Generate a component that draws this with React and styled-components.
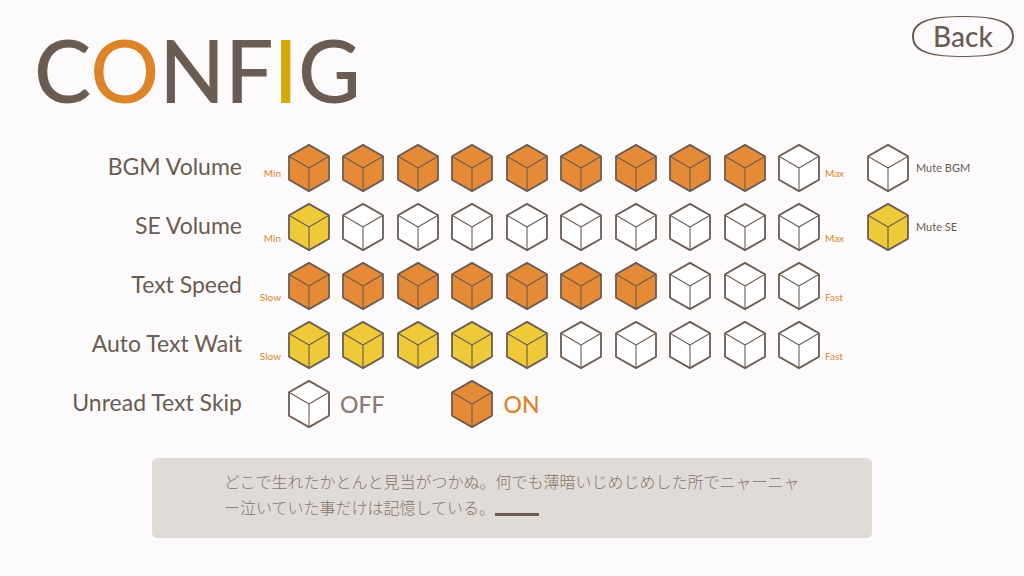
import React, { useState } from "react";
import styled, { createGlobalStyle } from "styled-components";

const ink = "#6b5c53";
const orange = "#e58a36";
const yellow = "#efca38";

const GlobalStyle = createGlobalStyle`
  *, *::before, *::after { box-sizing: border-box; }
  body {
    margin: 0;
    background: #fcfafa;
    color: ${ink};
    font-family: Lato, "Noto Sans CJK JP", sans-serif;
  }
`;

const Page = styled.div`
  min-height: 100vh;
`;

const Header = styled.header`
  display: flex;
  justify-content: space-between;
  align-items: flex-start;
  padding: 16px 10px 32px 34px;
`;

const Title = styled.h1`
  margin: 12px 0 0;
  font-size: 86px;
  line-height: 84px;
  font-weight: 500;
`;

const Accent = styled.span`
  color: ${(p) => p.$color};
`;

const BackButton = styled.button`
  position: relative;
  width: 102px;
  height: 41px;
  padding: 0;
  border: 0;
  background: none;
  color: ${ink};
  font: 500 28px/41px Lato, sans-serif;
  cursor: pointer;
`;

const BackOutline = styled.svg`
  position: absolute;
  inset: 0;
  width: 100%;
  height: 100%;
`;

const BackText = styled.span`
  position: relative;
`;

const Settings = styled.main`
  display: flex;
  flex-direction: column;
  gap: 11px;
`;

const Row = styled.fieldset`
  display: grid;
  grid-template-columns: 242px 46px minmax(0, 1fr) 47px 157px;
  align-items: center;
  min-width: 0;
  height: 48px;
  margin: 0;
  padding: 0;
  border: 0;
`;

const RowName = styled.span`
  padding-bottom: 4px;
  font-size: 23px;
  line-height: 24px;
  text-align: right;
  white-space: nowrap;
`;

const Hint = styled.span`
  padding: ${(p) => (p.$low ? "22px" : "9px")} 7px 0 5px;
  color: #dc842f;
  font-size: 10px;
  line-height: 12px;
  text-align: ${(p) => p.$align};
`;

const Steps = styled.div`
  display: flex;
  justify-content: space-between;
`;

const Choices = styled.div`
  display: flex;
  gap: 67px;
`;

const Option = styled.label`
  position: relative;
  display: inline-flex;
  align-items: center;
  justify-self: start;
  gap: ${(p) => p.$gap || "0"};
  cursor: pointer;
`;

const HiddenInput = styled.input`
  position: absolute;
  inset: 0;
  width: 100%;
  height: 100%;
  margin: 0;
  opacity: 0;
  cursor: pointer;
`;

const CubeSvg = styled.svg`
  display: block;
  flex: none;
  width: 42px;
  height: 48px;
`;

const MuteText = styled.span`
  font-size: 11px;
  line-height: 14px;
  white-space: nowrap;
`;

const ChoiceText = styled.span`
  color: ${(p) => p.$color};
  font-size: 23px;
  line-height: 24px;
  font-weight: 500;
`;

const Preview = styled.section`
  margin: 30px 152px 0;
  padding: 10px 72px 18px;
  border-radius: 5px;
  background: #e0dbd7;
`;

const PreviewText = styled.p`
  margin: 0;
  color: #85766e;
  font-family: "Noto Sans CJK JP", sans-serif;
  font-weight: 300;
  font-size: 16px;
  line-height: 26px;
`;

const Caret = styled.span`
  display: inline-block;
  width: 44px;
  height: 3px;
  background: ${ink};
  vertical-align: bottom;
  margin-bottom: 4px;
`;

function Cube({ fill }) {
  return (
    <CubeSvg viewBox="0 0 42 48" aria-hidden="true" fill="none" stroke={ink} strokeLinejoin="round">
      <path d="M21 0.9 41 12.3V35.7L21 47.1 1 35.7V12.3Z" fill={fill} strokeWidth="1.8" />
      <path d="M1 12.3 21 24 41 12.3M21 24V47" strokeWidth="1.1" />
    </CubeSvg>
  );
}

function Slider({ name, low, high, value, onChange, color, lowHints, children }) {
  return (
    <Row aria-label={name}>
      <RowName>{name}</RowName>
      <Hint $align="right" $low={lowHints}>{low}</Hint>
      <Steps>
        {Array.from({ length: 10 }, (_, i) => (
          <Option key={i}>
            <HiddenInput
              type="radio"
              name={name}
              aria-label={`${name} ${i + 1}`}
              checked={value === i + 1}
              onChange={() => onChange(i + 1)}
            />
            <Cube fill={i < value ? color : "#fff"} />
          </Option>
        ))}
      </Steps>
      <Hint $align="left" $low={lowHints}>{high}</Hint>
      {children}
    </Row>
  );
}

function Mute({ name, color, checked, onChange }) {
  return (
    <Option $gap="7px">
      <HiddenInput type="checkbox" checked={checked} onChange={(e) => onChange(e.target.checked)} />
      <Cube fill={checked ? color : "#fff"} />
      <MuteText>{name}</MuteText>
    </Option>
  );
}

export default function App() {
  const [bgm, setBgm] = useState(9);
  const [se, setSe] = useState(1);
  const [speed, setSpeed] = useState(7);
  const [wait, setWait] = useState(5);
  const [muteBgm, setMuteBgm] = useState(false);
  const [muteSe, setMuteSe] = useState(true);
  const [skip, setSkip] = useState("ON");

  return (
    <Page>
      <GlobalStyle />
      <Header>
        <Title>
          C<Accent $color="#dc842a">O</Accent>NF<Accent $color="#d3aa0a">I</Accent>G
        </Title>
        <BackButton type="button">
          <BackOutline viewBox="0 0 102 41" aria-hidden="true">
            <path
              fill={ink}
              fillRule="evenodd"
              d="M51 0C80 0 102 3 102 20.5S80 41 51 41 0 38 0 20.5 22 0 51 0ZM51 1C24 1 2 4.5 2 20.5S24 40 51 40 100 36.500 100 20.500 78 1 51 1Z"
            />
          </BackOutline>
          <BackText>Back</BackText>
        </BackButton>
      </Header>

      <Settings>
        <Slider name="BGM Volume" low="Min" high="Max" value={bgm} onChange={setBgm} color={orange}>
          <Mute name="Mute BGM" color={orange} checked={muteBgm} onChange={setMuteBgm} />
        </Slider>
        <Slider name="SE Volume" low="Min" high="Max" value={se} onChange={setSe} color={yellow} lowHints>
          <Mute name="Mute SE" color={yellow} checked={muteSe} onChange={setMuteSe} />
        </Slider>
        <Slider name="Text Speed" low="Slow" high="Fast" value={speed} onChange={setSpeed} color={orange} lowHints />
        <Slider name="Auto Text Wait" low="Slow" high="Fast" value={wait} onChange={setWait} color={yellow} lowHints />
        <Row aria-label="Unread Text Skip">
          <RowName>Unread Text Skip</RowName>
          <span />
          <Choices>
            {["OFF", "ON"].map((choice) => (
              <Option key={choice} $gap="10px">
                <HiddenInput
                  type="radio"
                  name="skip"
                  checked={skip === choice}
                  onChange={() => setSkip(choice)}
                />
                <Cube fill={skip === choice ? orange : "#fff"} />
                <ChoiceText $color={skip === choice ? "#dc842a" : "#8c7b72"}>{choice}</ChoiceText>
              </Option>
            ))}
          </Choices>
        </Row>
      </Settings>

      <Preview aria-label="Text preview">
        <PreviewText lang="ja">
          どこで生れたかとんと見当がつかぬ。何でも薄暗いじめじめした所でニャーニャ
          <br />
          ー泣いていた事だけは記憶している。
          <Caret />
        </PreviewText>
      </Preview>
    </Page>
  );
}
